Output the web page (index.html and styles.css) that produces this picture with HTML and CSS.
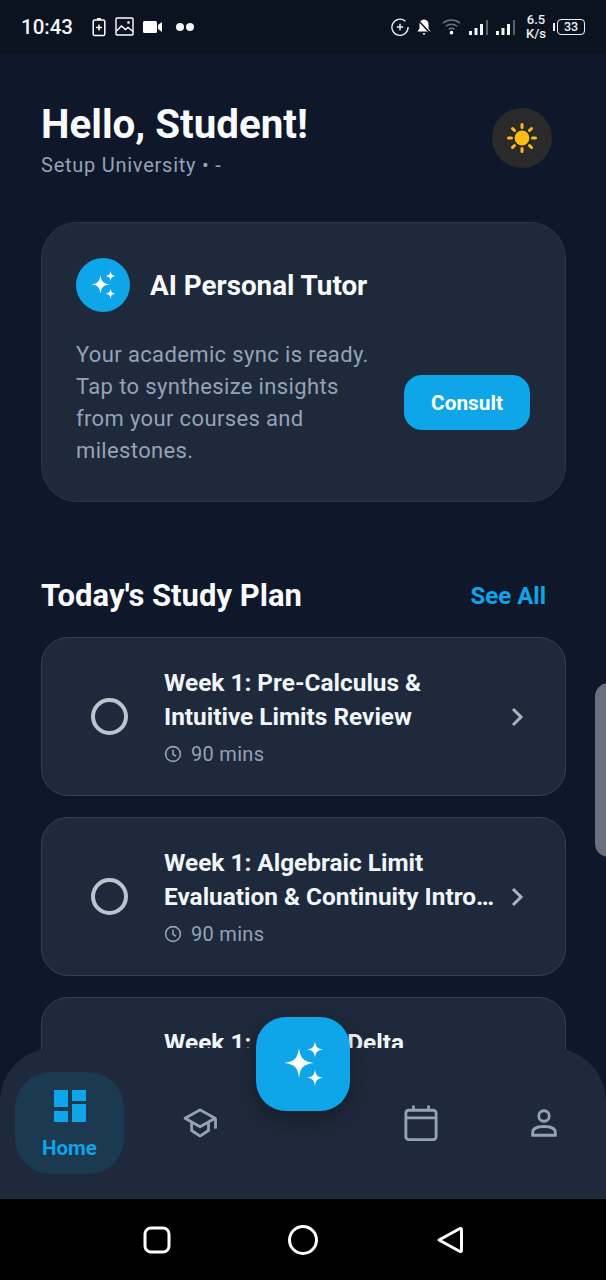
FILE: index.html
```html
<!DOCTYPE html>
<html lang="en">
<head>
  <meta charset="UTF-8">
  <title>Home</title>
  <meta name="viewport" content="width=device-width, initial-scale=1.0">
  <link rel="stylesheet" href="styles.css">
</head>
<body>

<svg class="sprite" width="0" height="0">
  <defs>
    <symbol id="sparkle" viewBox="0 0 24 24">
      <path fill="currentColor" d="M10 4c.7 5 2 6.800 7.500 7.500-5.500.7-6.800 2-7.500 7.500-.7-5.500-2-6.800-7.500-7.500C8 10.800 9.300 9 10 4z"/>
      <path fill="currentColor" d="M18 .6c.4 2.900 1.200 3.700 4 4.100-2.800.4-3.600 1.200-4 4.100-.4-2.900-1.200-3.700-4-4.100 2.800-.4 3.600-1.200 4-4.100z"/>
      <path fill="currentColor" d="M18 14.800c.4 2.900 1.200 3.700 4 4.100-2.800.4-3.600 1.200-4 4.100-.4-2.900-1.200-3.700-4-4.100 2.800-.4 3.600-1.200 4-4.100z"/>
    </symbol>
    <symbol id="clock" viewBox="0 0 18 18">
      <circle cx="9" cy="9" r="7.400" fill="none" stroke="currentColor" stroke-width="1.600"/>
      <path d="M9 4.800V9.400l3 1.800" fill="none" stroke="currentColor" stroke-width="1.600"/>
    </symbol>
    <symbol id="chevron" viewBox="0 0 14 20">
      <path d="M3 2l8 8-8 8" fill="none" stroke="currentColor" stroke-width="3"/>
    </symbol>
  </defs>
</svg>

<div class="phone">
  <div class="status-bar">
    <div class="status-left">
      <span class="clock-time">10:43</span>
      <svg class="st-icon" width="14" height="20" viewBox="0 0 14 20">
        <path d="M5 1h4v2H5z" fill="#fff"/>
        <rect x="1.200" y="3" width="11.600" height="15.600" rx="1.600" fill="none" stroke="#fff" stroke-width="1.500"/>
        <path d="M7 7.500v6M4 10.500h6" stroke="#fff" stroke-width="1.500"/>
      </svg>
      <svg class="st-icon" width="19" height="19" viewBox="0 0 19 19">
        <rect x="1" y="1" width="17" height="17" rx="1" fill="none" stroke="#fff" stroke-width="1.400"/>
        <path d="M1.500 14l5-5 4 3.500 2.500-2 5 4" fill="none" stroke="#fff" stroke-width="1.400"/>
        <circle cx="13.500" cy="5.500" r="1.300" fill="#fff"/>
      </svg>
      <svg class="st-icon" width="19" height="14" viewBox="0 0 19 14">
        <rect x="0" y="1" width="14" height="12" rx="1.500" fill="#fff"/>
        <path d="M15 5l4-3v10l-4-3z" fill="#fff"/>
      </svg>
      <span class="st-dots"><i></i><i></i></span>
    </div>
    <div class="status-right">
      <svg class="st-icon" width="18" height="18" viewBox="0 0 20 20">
        <path d="M16 3.600A9 9 0 1 0 19 10" fill="none" stroke="#eef0f3" stroke-width="1.500"/>
        <path d="M10 6.500v7M6.500 10h7" stroke="#eef0f3" stroke-width="1.600"/>
      </svg>
      <svg class="st-icon bell" width="16" height="18" viewBox="0 0 17 19">
        <path d="M8.500 1.500c3.200 0 4.800 2.400 4.800 5.200v4.500l2.200 3H1.500l2.200-3V6.700c0-2.800 1.600-5.200 4.800-5.200z" fill="#fff"/>
        <path d="M6.800 16.200h3.400l-1.700 2z" fill="#fff"/>
        <path d="M1 1l15 16" stroke="#0b1220" stroke-width="1.600"/>
      </svg>
      <svg class="st-icon" width="19" height="17" viewBox="0 0 20 18">
        <path d="M1 5.500c5-4.400 13-4.400 18 0M4 8.800c3.400-3 8.600-3 12 0M7 12c1.800-1.500 4.200-1.500 6 0" fill="none" stroke="#6f747c" stroke-width="1.500"/>
        <circle cx="10" cy="15.500" r="1.900" fill="#fff"/>
      </svg>
      <svg class="st-icon" width="20" height="16" viewBox="0 0 20 16">
        <path d="M1 12h3v4H1zM6.500 9h3v7h-3zM12 5h3v11h-3z" fill="#f3f4f6"/>
        <path d="M18 1h2v15h-2z" fill="#5b6068"/>
      </svg>
      <svg class="st-icon" width="20" height="16" viewBox="0 0 20 16">
        <path d="M1 12h3v4H1zM6.500 9h3v7h-3zM12 5h3v11h-3z" fill="#f3f4f6"/>
        <path d="M18 1h2v15h-2z" fill="#5b6068"/>
      </svg>
      <span class="st-speed">6.5<br>K/s</span>
      <span class="st-battery"><i class="st-cap"></i><span class="st-level">33</span></span>
    </div>
  </div>

  <main class="content">
    <header class="greeting">
      <div>
        <h1 class="greeting-title">Hello, Student!</h1>
        <p class="greeting-sub">Setup University • -</p>
      </div>
      <div class="theme-btn">
        <svg width="34" height="34" viewBox="0 0 34 34">
          <circle cx="17" cy="17" r="7.400" fill="#fbbc17"/>
          <path d="M17 3.500v3M17 27.500v3M3.500 17h3M27.500 17h3M7.500 7.500l2 2M24.500 24.500l2 2M7.500 26.500l2-2M24.500 9.500l2-2" stroke="#fbbc17" stroke-width="3" stroke-linecap="round"/>
        </svg>
      </div>
    </header>

    <section class="tutor-card">
      <div class="tutor-head">
        <div class="tutor-badge"><svg width="30" height="30"><use href="#sparkle"/></svg></div>
        <h2 class="tutor-title">AI Personal Tutor</h2>
      </div>
      <div class="tutor-body">
        <p class="tutor-text">Your academic sync is ready. Tap to synthesize insights from your courses and milestones.</p>
        <button class="consult-btn">Consult</button>
      </div>
    </section>

    <div class="plan-head">
      <h2 class="plan-title">Today's Study Plan</h2>
      <a class="see-all">See All</a>
    </div>

    <div class="plan-list">
      <article class="plan-item">
        <span class="check"></span>
        <div class="plan-info">
          <h3 class="plan-name"><span>Week 1: Pre-Calculus &amp;</span><span>Intuitive Limits Review</span></h3>
          <div class="plan-time"><svg width="18" height="18"><use href="#clock"/></svg>90 mins</div>
        </div>
        <svg class="chevron" width="14" height="20"><use href="#chevron"/></svg>
      </article>
      <article class="plan-item">
        <span class="check"></span>
        <div class="plan-info">
          <h3 class="plan-name"><span>Week 1: Algebraic Limit</span><span>Evaluation &amp; Continuity Introduction</span></h3>
          <div class="plan-time"><svg width="18" height="18"><use href="#clock"/></svg>90 mins</div>
        </div>
        <svg class="chevron" width="14" height="20"><use href="#chevron"/></svg>
      </article>
      <article class="plan-item">
        <span class="check"></span>
        <div class="plan-info">
          <h3 class="plan-name"><span>Week 1: Epsilon-Delta</span><span>Definition of Limits</span></h3>
          <div class="plan-time"><svg width="18" height="18"><use href="#clock"/></svg>90 mins</div>
        </div>
        <svg class="chevron" width="14" height="20"><use href="#chevron"/></svg>
      </article>
    </div>
  </main>

  <div class="edge-handle"></div>

  <nav class="bottom-nav">
    <div class="nav-item active">
      <svg width="32" height="32" viewBox="0 0 32 32">
        <path fill="currentColor" d="M0 0h14v17H0zM18 0h14v11H18zM18 14h14v18H18zM0 21h14v11H0z"/>
      </svg>
      <span>Home</span>
    </div>
    <div class="nav-item nav-courses">
      <svg width="36" height="30" viewBox="0 0 38 32" fill="none" stroke="currentColor" stroke-width="3" stroke-linejoin="round">
        <path d="M18 2L2 11l16 9 16-9z"/>
        <path d="M9 15v9l9 6 9-6v-9"/>
        <path d="M34.500 11v11"/>
      </svg>
    </div>
    <div class="nav-spacer"></div>
    <div class="nav-item nav-calendar">
      <svg width="34" height="37" viewBox="0 0 36 38" fill="none" stroke="currentColor" stroke-width="3">
        <rect x="2" y="5" width="32" height="31" rx="3"/>
        <path d="M2 13h32M10 0v6M26 0v6"/>
      </svg>
    </div>
    <div class="nav-item nav-profile">
      <svg width="28" height="28" viewBox="0 0 30 32" fill="none" stroke="currentColor" stroke-width="3.200">
        <circle cx="15" cy="8" r="6"/>
        <path d="M2 30v-3c0-4 4-7 13-7s13 3 13 7v3z"/>
      </svg>
    </div>
  </nav>

  <button class="fab"><svg width="48" height="48"><use href="#sparkle"/></svg></button>

  <div class="system-nav">
    <svg width="28" height="28" viewBox="0 0 28 28"><rect x="2" y="2" width="24" height="24" rx="6" fill="none" stroke="#fff" stroke-width="3"/></svg>
    <svg width="32" height="32" viewBox="0 0 32 32"><circle cx="16" cy="16" r="13.500" fill="none" stroke="#fff" stroke-width="3"/></svg>
    <svg width="28" height="30" viewBox="0 0 28 30"><path d="M3 15L24 3.500c.6-.3 1.500 0 1.500 1v21c0 1-.9 1.300-1.500 1z" fill="none" stroke="#fff" stroke-width="3" stroke-linejoin="round"/></svg>
  </div>
</div>

</body>
</html>
```
FILE: styles.css
```css
* {
  box-sizing: border-box;
}
body {
  margin: 0;
  font-family: "Roboto", "Liberation Sans", sans-serif;
  background: #0f172a;
  color: #fff;
}
.sprite {
  position: absolute;
}
.phone {
  position: relative;
  width: 606px;
  height: 1280px;
  overflow: hidden;
  display: flex;
  flex-direction: column;
  background: #0f172a;
}

/* status bar */
.status-bar {
  height: 54px;
  flex: none;
  background: #0b1220;
  display: flex;
  justify-content: space-between;
  align-items: center;
  padding: 0 21px 1px 21px;
}
.status-left,
.status-right {
  display: flex;
  align-items: center;
}
.clock-time {
  font-size: 20.500px;
  font-weight: 500;
  color: #f3f4f6;
  margin-right: 19px;
}
.status-left .st-icon {
  margin-right: 9px;
}
.st-dots {
  display: flex;
  gap: 2px;
  margin-left: 5px;
}
.st-dots i {
  width: 8px;
  height: 8px;
  border-radius: 50%;
  background: #f3f4f6;
}
.status-right .st-icon {
  margin-right: 7px;
}
.status-right .bell {
  margin-right: 10px;
}
.st-speed {
  font-size: 13px;
  line-height: 14px;
  font-weight: 500;
  text-align: center;
  margin: 0 7px 0 4px;
  color: #eef0f3;
}
.st-battery {
  display: flex;
  align-items: center;
}
.st-cap {
  width: 2px;
  height: 8px;
  margin-right: 2px;
  background: #eef0f3;
}
.st-level {
  width: 28px;
  height: 16px;
  border: 1.500px solid #eef0f3;
  border-radius: 4px;
  font-size: 12.500px;
  line-height: 13px;
  font-weight: 500;
  text-align: center;
  color: #eef0f3;
}

/* scrolling part */
.content {
  flex: 1;
  overflow: hidden;
  padding: 51px 40px 0 41px;
}
.greeting {
  display: flex;
  justify-content: space-between;
  align-items: flex-start;
  padding-right: 14px;
}
.greeting-title {
  margin: 0;
  font-size: 40.300px;
  line-height: 40px;
  font-weight: 700;
  color: #f8fafc;
}
.greeting-sub {
  margin: 9px 0 0;
  font-size: 20px;
  line-height: 22px;
  letter-spacing: 0.75px;
  color: #94a3b8;
}
.theme-btn {
  width: 60px;
  height: 60px;
  margin-top: 3px;
  border-radius: 50%;
  background: #2a2a2a;
  display: flex;
  align-items: center;
  justify-content: center;
}

.tutor-card {
  margin-top: 46px;
  height: 280px;
  padding: 35px 35px 0 34px;
  background: #1e293b;
  border: 1px solid #1f3a52;
  border-radius: 36px;
}
.tutor-head {
  display: flex;
  align-items: center;
  gap: 20px;
}
.tutor-badge {
  width: 54px;
  height: 54px;
  border-radius: 50%;
  background: #0ea5e9;
  color: #fff;
  display: flex;
  align-items: center;
  justify-content: center;
}
.tutor-title {
  margin: 0;
  font-size: 27.800px;
  font-weight: 700;
  color: #f8fafc;
}
.tutor-body {
  display: flex;
  align-items: center;
  justify-content: space-between;
  margin-top: 27px;
}
.tutor-text {
  margin: 0;
  width: 310px;
  font-size: 22px;
  line-height: 32px;
  letter-spacing: 0.36px;
  color: #94a3b8;
}
.consult-btn {
  width: 126px;
  height: 55px;
  margin-bottom: 1px;
  border: none;
  border-radius: 18px;
  background: #0ea5e9;
  color: #fff;
  font-family: inherit;
  font-size: 20.800px;
  font-weight: 700;
}

.plan-head {
  display: flex;
  justify-content: space-between;
  align-items: center;
  margin-top: 74px;
  padding-right: 20px;
}
.plan-title {
  margin: 0;
  font-size: 31px;
  line-height: 40px;
  font-weight: 700;
  color: #f8fafc;
}
.see-all {
  font-size: 24px;
  font-weight: 700;
  color: #0ea5e9;
}
.plan-list {
  display: flex;
  flex-direction: column;
  gap: 21px;
  margin-top: 21px;
}
.plan-item {
  flex: none;
  height: 159px;
  display: flex;
  align-items: center;
  padding: 0 41px 0 49px;
  background: #1e293b;
  border: 1px solid #334155;
  border-radius: 27px;
}
.check {
  flex: none;
  width: 37px;
  height: 37px;
  border: 4px solid #bcc3ce;
  border-radius: 50%;
}
.plan-info {
  flex: 1;
  min-width: 0;
  margin-left: 36px;
}
.plan-name {
  margin: 0;
  font-size: 24.400px;
  line-height: 34px;
  font-weight: 700;
  color: #f1f5f9;
}
.plan-name span {
  display: block;
  white-space: nowrap;
  overflow: hidden;
  text-overflow: ellipsis;
}
.plan-time {
  display: flex;
  align-items: center;
  gap: 9px;
  margin-top: 7px;
  font-size: 20px;
  line-height: 26px;
  letter-spacing: 0.3px;
  color: #94a3b8;
}
.chevron {
  flex: none;
  margin-left: 11px;
  color: #aab2c0;
}

.edge-handle {
  position: absolute;
  top: 683px;
  right: -16px;
  width: 27px;
  height: 174px;
  border-radius: 16px;
  background: #6b6f7b;
}

/* bottom nav */
.bottom-nav {
  position: absolute;
  left: 0;
  right: 0;
  top: 1048px;
  height: 151px;
  display: flex;
  align-items: flex-start;
  padding: 24px 0 0 15px;
  background: #1e293b;
  border-radius: 54px 54px 0 0;
}
.nav-item {
  width: 100px;
  height: 102px;
  display: flex;
  flex-direction: column;
  align-items: center;
  justify-content: center;
  color: #94a3b8;
}
.nav-item.active {
  width: 109px;
  color: #0ea5e9;
  background: #1b3a52;
  border-radius: 36px;
  gap: 14px;
  padding-top: 4px;
}
.nav-item.active span {
  font-size: 20.500px;
  line-height: 24px;
  font-weight: 700;
}
.nav-spacer {
  width: 95px;
}
.nav-courses {
  margin-left: 27px;
}
.nav-calendar {
  margin-left: 25px;
}
.nav-profile {
  margin-left: 23px;
}
.fab {
  position: absolute;
  left: 256px;
  top: 1017px;
  width: 94px;
  height: 94px;
  padding: 0;
  border: none;
  border-radius: 30px;
  background: #0ea5e9;
  color: #fff;
  box-shadow: 0 8px 24px rgba(0, 0, 0, 0.3);
  display: flex;
  align-items: center;
  justify-content: center;
}

/* android buttons */
.system-nav {
  position: absolute;
  left: 0;
  right: 0;
  bottom: 0;
  height: 81px;
  background: #000;
  display: flex;
  justify-content: space-between;
  align-items: center;
  padding: 0 142.500px 0 143px;
}
```
